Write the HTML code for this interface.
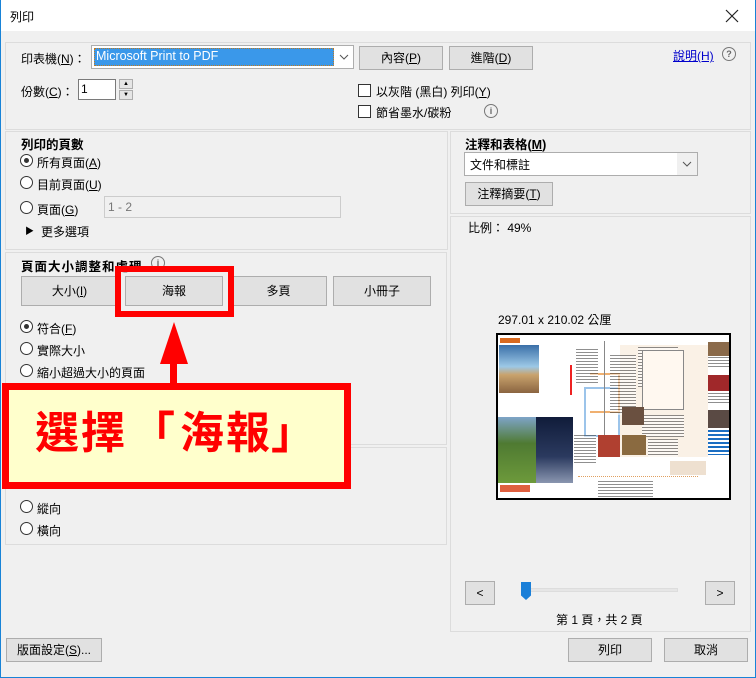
<!DOCTYPE html>
<html><head><meta charset="utf-8">
<style>
*{box-sizing:border-box;margin:0;padding:0}
body{width:756px;height:678px;overflow:hidden;background:#f0f0f0;font-family:"Liberation Sans","Noto Sans CJK TC",sans-serif;font-size:12px;color:#000;position:relative}
.a{position:absolute}
.win{left:0;top:0;width:756px;height:678px;border:1px solid #1883d7;border-top:none}
.title{left:1px;top:0;width:754px;height:31px;background:#fff}
.panel{position:absolute;border:1px solid #dcdcdc}
.btn{position:absolute;background:#e1e1e1;border:1px solid #adadad;text-align:center;font-size:12px}
.t{position:absolute;white-space:nowrap;font-size:12px}
.b{font-weight:bold;font-size:12.5px}
.radio{position:absolute;width:13px;height:13px;border:1px solid #333;border-radius:50%;background:#fff}
.radio.on::after{content:"";position:absolute;left:3px;top:3px;width:5px;height:5px;border-radius:50%;background:#333}
.chk{position:absolute;width:13px;height:13px;border:1px solid #333;background:#fff}
.info{position:absolute;width:14px;height:14px;border:1px solid #777;border-radius:50%;font-size:9px;line-height:12px;text-align:center;color:#666;font-weight:bold}
u{text-decoration:underline}
.big{position:absolute;top:407px;font-size:44px;font-weight:bold;color:#ff0000;font-family:"Noto Sans CJK TC",sans-serif;line-height:1}
.ln{position:absolute;background:repeating-linear-gradient(#333 0 1px,#fff 1px 3px);opacity:.55}
</style></head><body>
<div class="a title"></div>
<div class="a win"></div>
<div class="t" style="left:10px;top:8px">列印</div>
<svg class="a" style="left:725px;top:9px" width="14" height="14"><path d="M1 1L13 13M13 1L1 13" stroke="#222" stroke-width="1.2"/></svg>

<div class="panel" style="left:5px;top:42px;width:746px;height:88px"></div>
<div class="panel" style="left:5px;top:131px;width:443px;height:119px"></div>
<div class="panel" style="left:5px;top:252px;width:442px;height:193px"></div>
<div class="panel" style="left:5px;top:447px;width:442px;height:98px"></div>
<div class="panel" style="left:450px;top:131px;width:301px;height:83px"></div>
<div class="panel" style="left:450px;top:216px;width:301px;height:416px"></div>

<div class="t" style="left:21px;top:50px">印表機(<u>N</u>)：</div>
<div class="a" style="left:91px;top:45px;width:263px;height:24px;border:1px solid #adadad;background:#fff"></div>
<div class="a" style="left:94px;top:48px;width:240px;height:18px;background:#3a98ea;border:1px dotted #c07a20"></div>
<div class="t" style="left:96px;top:49px;color:#fff;font-size:12.5px">Microsoft Print to PDF</div>
<svg class="a" style="left:339px;top:54px" width="10" height="6"><path d="M1 1L5 5L9 1" stroke="#555" fill="none"/></svg>
<div class="btn" style="left:359px;top:46px;width:84px;height:24px;line-height:22px">內容(<u>P</u>)</div>
<div class="btn" style="left:449px;top:46px;width:84px;height:24px;line-height:22px">進階(<u>D</u>)</div>
<div class="t" style="left:673px;top:47px;color:#0000cc;text-decoration:underline">說明(H)</div>
<div class="info" style="left:722px;top:47px">?</div>

<div class="t" style="left:21px;top:83px">份數(<u>C</u>)：</div>
<div class="a" style="left:78px;top:79px;width:38px;height:21px;border:1px solid #7a7a7a;background:#fff"></div>
<div class="t" style="left:81px;top:82px">1</div>
<div class="a" style="left:119px;top:79px;width:14px;height:10px;border:1px solid #adadad;background:#e5e5e5;font-size:6px;text-align:center;line-height:8px">▲</div>
<div class="a" style="left:119px;top:90px;width:14px;height:10px;border:1px solid #adadad;background:#e5e5e5;font-size:6px;text-align:center;line-height:8px">▼</div>

<div class="chk" style="left:358px;top:84px"></div>
<div class="t" style="left:376px;top:83px">以灰階 (黑白) 列印(<u>Y</u>)</div>
<div class="chk" style="left:358px;top:105px"></div>
<div class="t" style="left:376px;top:104px">節省墨水/碳粉</div>
<div class="info" style="left:484px;top:104px">i</div>

<div class="t b" style="left:21px;top:134px">列印的頁數</div>
<div class="radio on" style="left:20px;top:154px"></div>
<div class="t" style="left:37px;top:154px">所有頁面(<u>A</u>)</div>
<div class="radio" style="left:20px;top:176px"></div>
<div class="t" style="left:37px;top:176px">目前頁面(<u>U</u>)</div>
<div class="radio" style="left:20px;top:201px"></div>
<div class="t" style="left:37px;top:201px">頁面(<u>G</u>)</div>
<div class="a" style="left:104px;top:196px;width:237px;height:22px;border:1px solid #ccc;background:#f0f0f0"></div>
<div class="t" style="left:108px;top:200px;color:#777">1 - 2</div>
<div class="t" style="left:25px;top:224px;font-size:9px">▶</div>
<div class="t" style="left:41px;top:223px">更多選項</div>

<div class="t b" style="left:21px;top:256px;letter-spacing:1px">頁面大小調整和處理</div>
<div class="info" style="left:151px;top:256px">i</div>
<div class="btn" style="left:21px;top:276px;width:97px;height:30px;line-height:28px">大小(<u>I</u>)</div>
<div class="btn" style="left:125px;top:276px;width:98px;height:30px;line-height:28px">海報</div>
<div class="btn" style="left:230px;top:276px;width:97px;height:30px;line-height:28px">多頁</div>
<div class="btn" style="left:333px;top:276px;width:98px;height:30px;line-height:28px">小冊子</div>
<div class="radio on" style="left:20px;top:320px"></div>
<div class="t" style="left:37px;top:320px">符合(<u>F</u>)</div>
<div class="radio" style="left:20px;top:342px"></div>
<div class="t" style="left:37px;top:342px">實際大小</div>
<div class="radio" style="left:20px;top:364px"></div>
<div class="t" style="left:37px;top:364px">縮小超過大小的頁面</div>

<div class="radio" style="left:20px;top:500px"></div>
<div class="t" style="left:37px;top:500px">縱向</div>
<div class="radio" style="left:20px;top:522px"></div>
<div class="t" style="left:37px;top:522px">橫向</div>

<div class="t b" style="left:465px;top:134px">注釋和表格(<u>M</u>)</div>
<div class="a" style="left:464px;top:152px;width:234px;height:24px;border:1px solid #adadad;background:#fff"></div>
<div class="a" style="left:677px;top:153px;width:20px;height:22px;background:#f0f0f0"></div>
<div class="t" style="left:470px;top:156px">文件和標註</div>
<svg class="a" style="left:682px;top:161px" width="10" height="6"><path d="M1 1L5 5L9 1" stroke="#555" fill="none"/></svg>
<div class="btn" style="left:465px;top:182px;width:88px;height:24px;line-height:22px">注釋摘要(<u>T</u>)</div>
<div class="t" style="left:468px;top:219px">比例： 49%</div>

<div class="t" style="left:498px;top:311px">297.01 x 210.02 公厘</div>
<div class="a" style="left:496px;top:333px;width:235px;height:167px;border:2px solid #000;background:#fff;overflow:hidden">
 <div class="a" style="left:122px;top:10px;width:88px;height:112px;background:#faf1e6"></div>
 <div class="a" style="left:2px;top:3px;width:20px;height:5px;background:#d96a20"></div>
 <div class="a" style="left:1px;top:10px;width:40px;height:48px;background:linear-gradient(#3a6fa8,#9cc8e6 45%,#c9a36d 62%,#8a6440)"></div>
 <div class="a" style="left:0;top:82px;width:38px;height:66px;background:linear-gradient(#7ea4c8,#4f7a32 40%,#6d9a3b)"></div>
 <div class="a" style="left:38px;top:82px;width:37px;height:66px;background:linear-gradient(#101c3a,#2b3a5f 60%,#8a96b0)"></div>
 <div class="a" style="left:2px;top:150px;width:30px;height:7px;background:#e06040"></div>
 <div class="a" style="left:72px;top:30px;width:2px;height:30px;background:#e22"></div>
 <div class="a" style="left:86px;top:52px;width:36px;height:50px;border:2px solid #9cc4ea"></div>
 <div class="a" style="left:92px;top:38px;width:30px;height:40px;border:2px solid #f0b070;border-left:none"></div>
 <div class="a" style="left:106px;top:6px;width:1px;height:110px;background:#888"></div>
 <div class="ln" style="left:78px;top:14px;width:22px;height:36px"></div>
 <div class="ln" style="left:112px;top:20px;width:26px;height:60px"></div>
 <div class="ln" style="left:140px;top:12px;width:40px;height:40px"></div>
 <div class="a" style="left:144px;top:15px;width:42px;height:60px;border:1px solid #888;background:#fff8f0"></div>
 <div class="ln" style="left:144px;top:80px;width:42px;height:22px"></div>
 <div class="a" style="left:124px;top:72px;width:22px;height:18px;background:#6a5040"></div>
 <div class="a" style="left:100px;top:100px;width:22px;height:22px;background:#b04030"></div>
 <div class="a" style="left:124px;top:100px;width:24px;height:20px;background:#8a6a40"></div>
 <div class="ln" style="left:150px;top:104px;width:30px;height:18px"></div>
 <div class="ln" style="left:76px;top:100px;width:22px;height:30px"></div>
 <div class="a" style="left:80px;top:141px;width:120px;height:1px;border-top:1px dotted #e0a060"></div>
 <div class="ln" style="left:100px;top:146px;width:55px;height:16px"></div>
 <div class="a" style="left:172px;top:126px;width:36px;height:14px;background:#eee0d0"></div>
 <div class="a" style="left:210px;top:7px;width:22px;height:14px;background:#8a6a4a"></div>
 <div class="ln" style="left:210px;top:22px;width:22px;height:12px"></div>
 <div class="a" style="left:210px;top:40px;width:22px;height:16px;background:#a0282a"></div>
 <div class="ln" style="left:210px;top:58px;width:22px;height:12px"></div>
 <div class="a" style="left:210px;top:75px;width:22px;height:18px;background:#5a4a44"></div>
 <div class="a" style="left:210px;top:95px;width:22px;height:25px;background:repeating-linear-gradient(#1b6ec2 0 2px,#fff 2px 4px)"></div>
</div>

<div class="btn" style="left:465px;top:581px;width:30px;height:24px;line-height:22px">&lt;</div>
<div class="a" style="left:528px;top:588px;width:150px;height:4px;background:#e6e6e6;border:1px solid #ddd"></div>
<div class="a" style="left:521px;top:582px;width:10px;height:18px;background:#1a7fd8;clip-path:polygon(0 0,100% 0,100% 75%,50% 100%,0 75%)"></div>
<div class="btn" style="left:705px;top:581px;width:30px;height:24px;line-height:22px">&gt;</div>
<div class="t" style="left:556px;top:611px">第 1 頁，共 2 頁</div>

<div class="btn" style="left:6px;top:638px;width:96px;height:24px;line-height:22px">版面設定(<u>S</u>)...</div>
<div class="btn" style="left:568px;top:638px;width:84px;height:24px;line-height:22px">列印</div>
<div class="btn" style="left:664px;top:638px;width:84px;height:24px;line-height:22px">取消</div>

<div class="a" style="left:115px;top:266px;width:119px;height:51px;border:6px solid #ff0000"></div>
<div class="a" style="left:160px;top:322px;width:28px;height:42px;background:#ff0000;clip-path:polygon(50% 0,100% 100%,0 100%)"></div>
<div class="a" style="left:170px;top:360px;width:7px;height:26px;background:#ff0000"></div>
<div class="a" style="left:2px;top:383px;width:349px;height:106px;border:7px solid #ff0000;background:#ffffcc"></div>
<div class="big" style="left:35px">選</div>
<div class="big" style="left:81px">擇</div>
<div class="big" style="left:131px">「</div>
<div class="big" style="left:180px">海</div>
<div class="big" style="left:226px">報</div>
<div class="big" style="left:271px">」</div>
</body></html>
